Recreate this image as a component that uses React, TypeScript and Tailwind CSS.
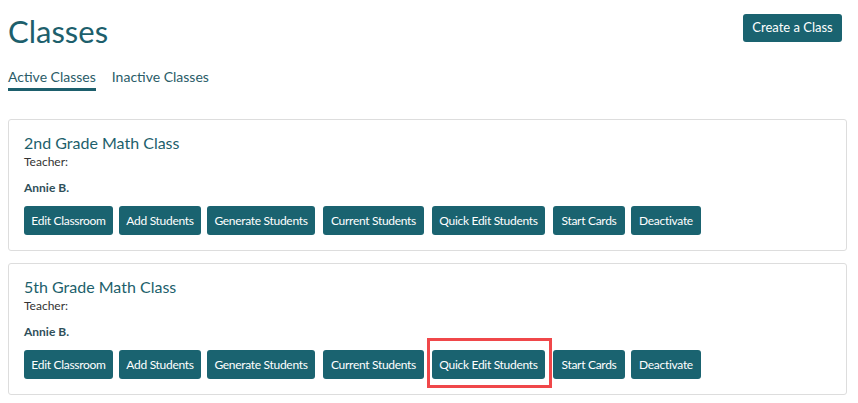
const actions = [
  { label: "Edit Classroom", w: "w-[89px]", ml: "ml-0" },
  { label: "Add Students", w: "w-[82px]", ml: "ml-[6px]" },
  { label: "Generate Students", w: "w-[108px]", ml: "ml-[6px]" },
  { label: "Current Students", w: "w-[101px]", ml: "ml-[8px]" },
  { label: "Quick Edit Students", w: "w-[113px]", ml: "ml-[8px]" },
  { label: "Start Cards", w: "w-[72px]", ml: "ml-[8px]" },
  { label: "Deactivate", w: "w-[70px]", ml: "ml-[6px]" },
];

const classes = [
  { name: "2nd Grade Math Class", teacher: "Annie B.", highlight: "" },
  { name: "5th Grade Math Class", teacher: "Annie B.", highlight: "Quick Edit Students" },
];

function ActionButton({ label, w, ml, highlight }: { label: string; w: string; ml: string; highlight: boolean }) {
  return (
    <div className={`relative ${ml}`}>
      <button
        className={`${w} h-[29px] rounded-[3px] bg-[#1a6370] text-white text-[12px] tracking-[-0.3px] leading-none whitespace-nowrap text-center`}
      >
        {label}
      </button>
      {highlight && (
        <div className="absolute -left-[5px] -right-[7px] -top-[12px] -bottom-[9px] border-[3px] border-[#f0474a] pointer-events-none" />
      )}
    </div>
  );
}

export default function App() {
  return (
    <div className="w-[858px] h-[403px] bg-white px-2 font-['Lato','Noto_Sans',sans-serif] overflow-hidden">
      <div className="flex justify-between items-start">
        <h1 className="mt-[13px] text-[31px] leading-[36px] text-[#1d5f6c]">Classes</h1>
        <button className="mt-[14px] mr-[8px] h-[28px] w-[99px] rounded-[3px] bg-[#1a6370] text-white text-[13px]">
          Create a Class
        </button>
      </div>

      <div className="mt-[18px] flex gap-4 text-[14px] leading-[20px] text-[#2a5c68]">
        <div>
          <span className="block">Active Classes</span>
          <div className="mt-[1px] h-[3px] bg-[#1d5f6c]" />
        </div>
        <span>Inactive Classes</span>
      </div>

      <div className="mt-[28px] w-[839px] flex flex-col gap-[12px]">
        {classes.map((c) => (
          <div key={c.name} className="h-[132px] border border-[#dddddd] rounded-[3px] px-[15px] pt-[13px]">
            <h2 className="text-[16px] leading-[20px] text-[#1d5f6c]">{c.name}</h2>
            <p className="mt-[1px] text-[12px] leading-[15px] text-[#333333]">Teacher:</p>
            <p className="mt-[11px] text-[12px] leading-[15px] font-bold text-[#2f4f5a]">{c.teacher}</p>
            <div className="mt-[11px] flex">
              {actions.map((a) => (
                <ActionButton key={a.label} label={a.label} w={a.w} ml={a.ml} highlight={a.label === c.highlight} />
              ))}
            </div>
          </div>
        ))}
      </div>
    </div>
  );
}
